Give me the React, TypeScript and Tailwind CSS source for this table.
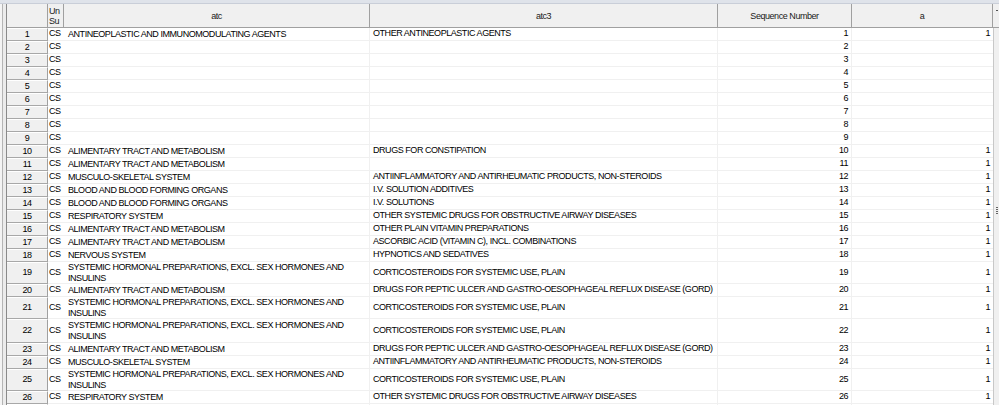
const SYS = ["SYSTEMIC HORMONAL PREPARATIONS, EXCL. SEX HORMONES AND", "INSULINS"];
const ALIM = "ALIMENTARY TRACT AND METABOLISM";
const CORT = "CORTICOSTEROIDS FOR SYSTEMIC USE, PLAIN";
const GORD = "DRUGS FOR PEPTIC ULCER AND GASTRO-OESOPHAGEAL REFLUX DISEASE (GORD)";
const NSAID = "ANTIINFLAMMATORY AND ANTIRHEUMATIC PRODUCTS, NON-STEROIDS";
const AIRWAY = "OTHER SYSTEMIC DRUGS FOR OBSTRUCTIVE AIRWAY DISEASES";

type Row = { atc: string | string[]; atc3: string; a: string; h?: number };

const rows: Row[] = [
  { atc: "ANTINEOPLASTIC AND IMMUNOMODULATING AGENTS", atc3: "OTHER ANTINEOPLASTIC AGENTS", a: "1" },
  { atc: "", atc3: "", a: "" },
  { atc: "", atc3: "", a: "" },
  { atc: "", atc3: "", a: "" },
  { atc: "", atc3: "", a: "" },
  { atc: "", atc3: "", a: "" },
  { atc: "", atc3: "", a: "" },
  { atc: "", atc3: "", a: "" },
  { atc: "", atc3: "", a: "" },
  { atc: ALIM, atc3: "DRUGS FOR CONSTIPATION", a: "1" },
  { atc: ALIM, atc3: "", a: "1" },
  { atc: "MUSCULO-SKELETAL SYSTEM", atc3: NSAID, a: "1" },
  { atc: "BLOOD AND BLOOD FORMING ORGANS", atc3: "I.V. SOLUTION ADDITIVES", a: "1" },
  { atc: "BLOOD AND BLOOD FORMING ORGANS", atc3: "I.V. SOLUTIONS", a: "1" },
  { atc: "RESPIRATORY SYSTEM", atc3: AIRWAY, a: "1" },
  { atc: ALIM, atc3: "OTHER PLAIN VITAMIN PREPARATIONS", a: "1" },
  { atc: ALIM, atc3: "ASCORBIC ACID (VITAMIN C), INCL. COMBINATIONS", a: "1" },
  { atc: "NERVOUS SYSTEM", atc3: "HYPNOTICS AND SEDATIVES", a: "1" },
  { atc: SYS, atc3: CORT, a: "1", h: 22 },
  { atc: ALIM, atc3: GORD, a: "1" },
  { atc: SYS, atc3: CORT, a: "1", h: 22 },
  { atc: SYS, atc3: CORT, a: "1", h: 24 },
  { atc: ALIM, atc3: GORD, a: "1" },
  { atc: "MUSCULO-SKELETAL SYSTEM", atc3: NSAID, a: "1" },
  { atc: SYS, atc3: CORT, a: "1", h: 22 },
  { atc: "RESPIRATORY SYSTEM", atc3: AIRWAY, a: "1" },
];

function HeaderCell({ w, children }: { w: string; children?: React.ReactNode }) {
  return (
    <div className={`${w} shrink-0 flex items-center justify-center border-r border-[#a0a0a0] leading-[10px]`}>
      {children}
    </div>
  );
}

function GridRow({ row, n }: { row: Row; n?: number }) {
  const h = row.h ?? 13;
  return (
    <div className="flex shrink-0" style={{ height: h }}>
      <div className="w-[41px] shrink-0 flex items-center justify-center bg-[#f0f0f0] border-t border-white border-b border-b-[#a8a8a8] border-r border-r-[#a0a0a0]">
        {n}
      </div>
      <div className="w-[16px] shrink-0 flex items-center pl-[1px] border-b border-[#f0f0f0]">{n && "CS"}</div>
      <div className="w-[306px] shrink-0 flex flex-col justify-center pl-[4px] leading-[10.5px] border-b border-r border-[#f0f0f0] whitespace-nowrap overflow-hidden">
        {Array.isArray(row.atc) ? row.atc.map((l) => <div key={l}>{l}</div>) : row.atc}
      </div>
      <div className="w-[348px] shrink-0 flex items-center pl-[3px] border-b border-r border-[#f0f0f0] whitespace-nowrap overflow-hidden">
        {row.atc3}
      </div>
      <div className="w-[134px] shrink-0 flex items-center justify-end pr-[3px] border-b border-r border-[#f0f0f0]">
        {n}
      </div>
      <div className="w-[141px] shrink-0 flex items-center justify-end pr-[3px] border-b border-[#f0f0f0]">
        {row.a}
      </div>
    </div>
  );
}

export default function App() {
  return (
    <div
      className="w-[999px] h-[405px] overflow-hidden bg-white text-black text-[9px] tracking-[-0.45px] flex flex-col"
      style={{ fontFamily: '"Liberation Sans", Arial, sans-serif' }}
    >
      <div className="h-[4px] shrink-0 bg-[#dfe3ea] border-b border-[#c9ced8]" />
      <div className="flex flex-1 min-h-0">
        <div className="w-[7px] shrink-0 bg-[#ececec] border-l-2 border-l-[#f4f4f4] border-r border-r-[#8a8a8a] flex">
          <div className="w-[1px] bg-[#b5b5b5]" />
        </div>
        <div className="flex-1 flex flex-col min-w-0">
          <div className="h-[24px] shrink-0 flex bg-[#f0f0f0] border-b border-[#a0a0a0] text-[#1a1a1a]">
            <HeaderCell w="w-[41px]" />
            <div className="w-[16px] shrink-0 flex flex-col justify-center pl-[1px] leading-[10px] border-r border-[#a0a0a0]">
              <span>Un</span>
              <span>Su</span>
            </div>
            <HeaderCell w="w-[306px]">atc</HeaderCell>
            <HeaderCell w="w-[348px]">atc3</HeaderCell>
            <HeaderCell w="w-[134px]">Sequence Number</HeaderCell>
            <HeaderCell w="w-[141px]">a</HeaderCell>
            <div className="flex-1 relative">
              <div className="absolute left-[3px] top-[6px] w-[2px] h-[1px] bg-[#555]" />
            </div>
          </div>
          <div className="flex flex-1 min-h-0">
            <div className="flex flex-col">
              {rows.map((r, i) => (
                <GridRow key={i} row={r} n={i + 1} />
              ))}
              <GridRow row={{ atc: "", atc3: "", a: "" }} />
            </div>
            <div className="flex-1 bg-[#f0f0f0] border-l border-[#c8c8c8] relative">
              <div className="absolute left-[2px] top-[179px] flex flex-col gap-[1px]">
                <div className="w-[2px] h-[1px] bg-[#666]" />
                <div className="w-[2px] h-[1px] bg-[#666]" />
                <div className="w-[2px] h-[1px] bg-[#666]" />
                <div className="w-[2px] h-[1px] bg-[#666]" />
              </div>
            </div>
          </div>
        </div>
      </div>
    </div>
  );
}
